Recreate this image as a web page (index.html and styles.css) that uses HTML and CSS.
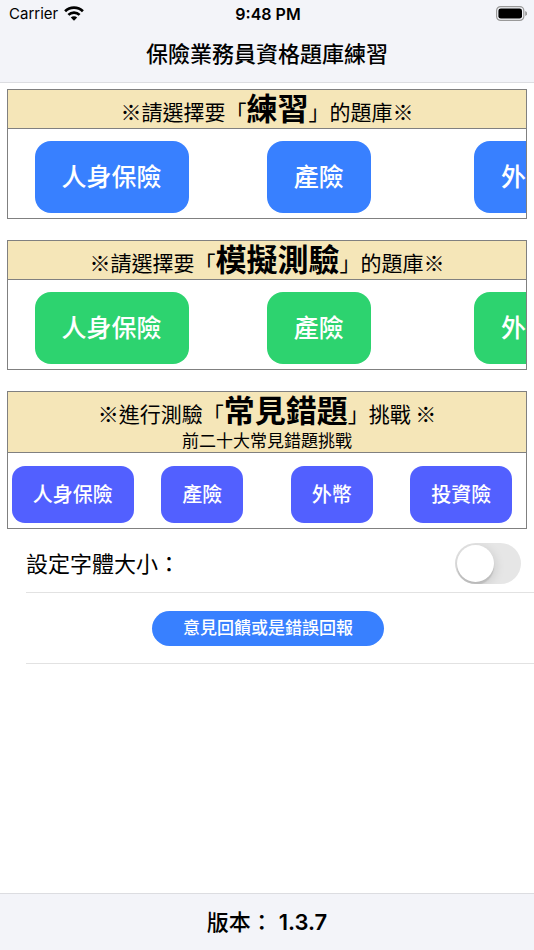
FILE: index.html
```
<!DOCTYPE html>
<html lang="zh-Hant">
<head>
  <meta charset="UTF-8" />
  <meta name="viewport" content="width=device-width, initial-scale=1.0"/>
  <title>保險業務員資格題庫練習</title>
  <link rel="stylesheet" href="styles.css">
</head>
<body>

  <header class="top-bar">
    <div class="status-bar">
      <div class="carrier">
        <span>Carrier</span>
        <svg class="wifi" viewBox="0 0 20 15" aria-hidden="true">
          <path d="M10 14.8 L6.8 11.6 A4.6 4.6 0 0 1 13.2 11.6 Z" fill="#000"/>
          <path d="M4.4 8.9 A8 8 0 0 1 15.6 8.9" fill="none" stroke="#000" stroke-width="2.7"/>
          <path d="M1.1 5.3 A12.7 12.7 0 0 1 18.9 5.3" fill="none" stroke="#000" stroke-width="2.7"/>
        </svg>
      </div>
      <div class="time">9:48 PM</div>
      <div class="battery">
        <svg viewBox="0 0 32 15" aria-hidden="true">
          <rect x="1.6" y="0.6" width="27.2" height="13.8" rx="4" fill="none" stroke="#999" stroke-width="1.2"/>
          <rect x="3.4" y="2.4" width="23.6" height="10.2" rx="2.4" fill="#000"/>
          <path d="M30.2 5 A2.6 2.6 0 0 1 30.2 10 Z" fill="#999"/>
        </svg>
      </div>
    </div>
    <h1>保險業務員資格題庫練習</h1>
  </header>

  <main class="main">
    <section class="card">
      <h2 class="card-title">※請選擇要「<strong>練習</strong>」的題庫※</h2>
      <div class="button-row wide practice">
        <div class="cell"><button type="button">人身保險</button></div>
        <div class="cell"><button type="button">產險</button></div>
        <div class="cell"><button type="button">外幣</button></div>
        <div class="cell"><button type="button">投資險</button></div>
      </div>
    </section>

    <section class="card">
      <h2 class="card-title">※請選擇要「<strong>模擬測驗</strong>」的題庫※</h2>
      <div class="button-row wide exam">
        <div class="cell"><button type="button">人身保險</button></div>
        <div class="cell"><button type="button">產險</button></div>
        <div class="cell"><button type="button">外幣</button></div>
        <div class="cell"><button type="button">投資險</button></div>
      </div>
    </section>

    <section class="card">
      <div class="card-head">
        <h2 class="card-title">※進行測驗「<strong>常見錯題</strong>」挑戰 ※</h2>
        <p class="card-note">前二十大常見錯題挑戰</p>
      </div>
      <div class="button-row challenge">
        <div class="cell"><button type="button">人身保險</button></div>
        <div class="cell"><button type="button">產險</button></div>
        <div class="cell"><button type="button">外幣</button></div>
        <div class="cell"><button type="button">投資險</button></div>
      </div>
    </section>

    <div class="row setting">
      <label for="fontSize">設定字體大小：</label>
      <input type="checkbox" id="fontSize" class="switch" role="switch">
    </div>
    <div class="row feedback">
      <button type="button" class="feedback-btn">意見回饋或是錯誤回報</button>
    </div>
  </main>

  <footer class="footer">版本： <span class="version">1.3.7</span></footer>

</body>
</html>
```
FILE: styles.css
```
* {
  margin: 0;
  padding: 0;
  box-sizing: border-box;
}

body {
  display: flex;
  flex-direction: column;
  min-height: 100vh;
  background: #ffffff;
  color: #000000;
  font-family: Inter, "Noto Sans CJK TC", sans-serif;
}

button {
  border: none;
  color: #ffffff;
  font-family: inherit;
  font-weight: 500;
  line-height: 1;
  white-space: nowrap;
  cursor: pointer;
}

.top-bar {
  background: #f3f4f9;
  border-bottom: 1px solid #dcdde1;
}

.status-bar {
  display: grid;
  grid-template-columns: 1fr auto 1fr;
  align-items: center;
  height: 27px;
  padding: 0 7px 0 9px;
  font-size: 16px;
}

.carrier {
  display: flex;
  align-items: center;
  gap: 6px;
  font-size: 15px;
}

.wifi {
  width: 20px;
  height: 15px;
}

.time {
  font-weight: 600;
}

.battery {
  display: flex;
  justify-content: flex-end;
}

.battery svg {
  width: 32px;
  height: 15px;
}

.top-bar h1 {
  height: 55px;
  font-size: 22px;
  font-weight: 500;
  line-height: 55px;
  text-align: center;
}

.main {
  flex: 1;
  padding-top: 6px;
}

.card {
  margin: 0 7px 21px;
  border: 1px solid #808080;
  overflow: hidden;
}

.card-title {
  height: 38px;
  background: #f5e6b8;
  font-family: "Noto Sans CJK TC", sans-serif;
  font-size: 21px;
  font-weight: 400;
  line-height: 34px;
  text-align: center;
  white-space: nowrap;
}

.card-title strong {
  font-size: 31px;
  font-weight: 700;
}

.card-note {
  font-size: 17px;
  line-height: 22px;
  text-align: center;
}

.card-head {
  background: #f5e6b8;
}

.button-row {
  display: flex;
  border-top: 1px solid #808080;
  padding: 12px 0 5px;
}

.cell {
  flex: 0 0 25%;
  display: flex;
  justify-content: center;
}

.wide {
  overflow-x: auto;
  scrollbar-width: none;
}

.wide .cell {
  flex-basis: 40%;
}

.wide button {
  height: 72px;
  padding: 0 27px;
  border-radius: 16px;
  font-size: 25px;
}

.practice button {
  background: #3880ff;
}

.exam button {
  background: #2dd36f;
}

.challenge {
  padding-top: 13px;
}

.challenge button {
  height: 57px;
  padding: 0 21px;
  border-radius: 13px;
  background: #5260ff;
  font-size: 20px;
}

.row {
  display: flex;
  align-items: center;
  margin-left: 26px;
  border-bottom: 1px solid #e2e2e2;
  line-height: 1;
}

.card + .row {
  margin-top: -21px;
}

.setting {
  justify-content: space-between;
  height: 64px;
  padding: 6px 13px 0 0;
  font-size: 22px;
}

.switch {
  appearance: none;
  display: flex;
  align-items: center;
  width: 66px;
  height: 41px;
  padding: 0 2px;
  border-radius: 21px;
  background: #e6e6e6;
  overflow: hidden;
  cursor: pointer;
}

.switch::before {
  content: "";
  width: 37px;
  height: 37px;
  border-radius: 50%;
  background: #ffffff;
  box-shadow: 0 3px 12px rgba(0, 0, 0, 0.16), 0 3px 1px rgba(0, 0, 0, 0.1);
}

.switch:checked {
  justify-content: flex-end;
  background: #3880ff;
}

.feedback {
  justify-content: center;
  height: 71px;
  padding-right: 24px;
}

.feedback-btn {
  height: 35px;
  padding: 0 31px;
  border-radius: 18px;
  background: #3880ff;
  font-size: 17px;
}

.footer {
  height: 57px;
  background: #f3f4f9;
  border-top: 1px solid #dcdde1;
  font-size: 22px;
  font-weight: 500;
  line-height: 56px;
  text-align: center;
}

.version {
  font-weight: 600;
}
```
